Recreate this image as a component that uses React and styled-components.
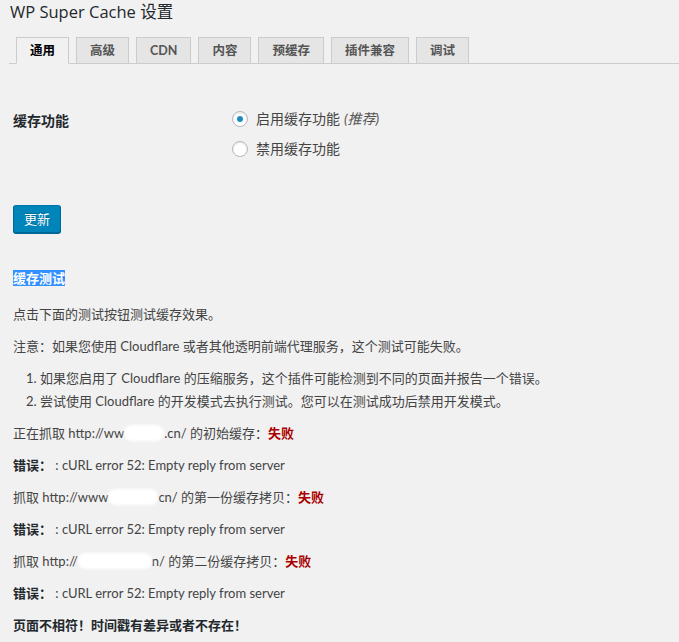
import React from "react";
import styled, { createGlobalStyle } from "styled-components";

const Global = createGlobalStyle`
  html, body { margin: 0; padding: 0; background: #f1f1f1; }
  body {
    font-family: Lato, "Noto Sans CJK SC", sans-serif;
    font-size: 13px;
    color: #444;
  }
`;

const Page = styled.div`
  width: 679px;
  height: 642px;
  overflow: hidden;
  background: #f1f1f1;
`;

const Title = styled.h1`
  margin: 0;
  padding-left: 10px;
  font-family: "Open Sans", "Noto Sans CJK SC", sans-serif;
  font-size: 16.5px;
  line-height: 24px;
  font-weight: 400;
  color: #23282d;
`;

const TabBar = styled.nav`
  display: flex;
  align-items: flex-end;
  margin: 13px 0 0 9px;
  height: 26px;
  border-bottom: 1px solid #ccc;
`;

const Tab = styled.div`
  box-sizing: border-box;
  height: 27px;
  margin-left: 7px;
  margin-bottom: -1px;
  padding: 0 13px;
  line-height: 26px;
  font-size: 12.5px;
  font-weight: 700;
  color: ${(p) => (p.$active ? "#000" : "#555")};
  background: ${(p) => (p.$active ? "#f1f1f1" : "#e5e5e5")};
  border: 1px solid #ccc;
  border-bottom-color: ${(p) => (p.$active ? "#f1f1f1" : "#ccc")};
`;

const Content = styled.div`
  padding-left: 13px;
`;

const FormRow = styled.div`
  display: grid;
  grid-template-columns: 219px 1fr;
  margin-top: 45px;
`;

const Label = styled.div`
  padding-top: 2px;
  line-height: 20px;
  height: 20px;
  font-size: 14px;
  font-weight: 700;
  color: #23282d;
`;

const Options = styled.div`
  display: flex;
  flex-direction: column;
  gap: 10px;
`;

const Option = styled.label`
  display: flex;
  align-items: center;
  gap: 8px;
  height: 20px;
  line-height: 20px;
  font-size: 14px;
  color: #444;
`;

const Radio = styled.span`
  box-sizing: border-box;
  flex: none;
  width: 16px;
  height: 16px;
  border-radius: 50%;
  border: 1px solid #b4b9be;
  background: #fff;
  box-shadow: inset 0 1px 2px rgba(0, 0, 0, 0.1);
  display: flex;
  align-items: center;
  justify-content: center;
  &::after {
    content: "";
    display: ${(p) => (p.$checked ? "block" : "none")};
    width: 6px;
    height: 6px;
    border-radius: 50%;
    background: #1e8cbe;
  }
`;

const Em = styled.em`
  margin-left: 4px;
  color: #555;
`;

const Button = styled.button`
  box-sizing: border-box;
  display: block;
  margin-top: 46px;
  height: 28px;
  padding: 0 10px 1px;
  background: #0085ba;
  border: 1px solid;
  border-color: #0073aa #006799 #006799;
  border-radius: 3px;
  box-shadow: 0 1px 0 #006799;
  color: #fff;
  font-family: inherit;
  font-size: 13px;
  text-shadow: 0 -1px 1px #006799;
`;

const Heading = styled.h3`
  margin: 37px 0 0;
  height: 16px;
  font-size: 13px;
  line-height: 16px;
  font-weight: 700;
`;

const Selected = styled.span`
  background: #3390ff;
  color: #fff;
`;

const Para = styled.p`
  margin: ${(p) => (p.$first ? "18px" : "12px")} 0 0;
  height: 20px;
  line-height: 20px;
  white-space: nowrap;
  font-weight: ${(p) => (p.$bold ? 700 : 400)};
  color: ${(p) => (p.$bold ? "#23282d" : "#444")};
`;

const List = styled.ol`
  margin: 12px 0 0;
  padding-left: 13px;
  list-style-position: inside;
  display: flex;
  flex-direction: column;
  gap: 3px;
`;

const Item = styled.li`
  height: 20px;
  line-height: 20px;
  white-space: nowrap;
`;

const Strong = styled.strong`
  color: #23282d;
`;

const Fail = styled.strong`
  color: #a00;
`;

const Blob = styled.span`
  display: inline-block;
  width: ${(p) => p.$w}px;
  height: 16px;
  margin-bottom: -3px;
  background: #fff;
  border-radius: 8px;
  filter: blur(1.5px);
`;

const tabs = ["通用", "高级", "CDN", "内容", "预缓存", "插件兼容", "调试"];

export default function App() {
  return (
    <Page>
      <Global />
      <Title>WP Super Cache 设置</Title>
      <TabBar>
        {tabs.map((t, i) => (
          <Tab key={t} $active={i === 0}>
            {t}
          </Tab>
        ))}
      </TabBar>
      <Content>
        <FormRow>
          <Label>缓存功能</Label>
          <Options>
            <Option>
              <Radio $checked />
              <span>
                启用缓存功能<Em>(推荐)</Em>
              </span>
            </Option>
            <Option>
              <Radio />
              <span>禁用缓存功能</span>
            </Option>
          </Options>
        </FormRow>
        <Button>更新</Button>
        <Heading>
          <Selected>缓存测试</Selected>
        </Heading>
        <Para $first>点击下面的测试按钮测试缓存效果。</Para>
        <Para>注意：如果您使用 Cloudflare 或者其他透明前端代理服务，这个测试可能失败。</Para>
        <List>
          <Item>如果您启用了 Cloudflare 的压缩服务，这个插件可能检测到不同的页面并报告一个错误。</Item>
          <Item>尝试使用 Cloudflare 的开发模式去执行测试。您可以在测试成功后禁用开发模式。</Item>
        </List>
        <Para>
          正在抓取 http://ww<Blob $w={40} />.cn/ 的初始缓存：<Fail>失败</Fail>
        </Para>
        <Para>
          <Strong>错误：</Strong> : cURL error 52: Empty reply from server
        </Para>
        <Para>
          抓取 http://www<Blob $w={50} />cn/ 的第一份缓存拷贝：<Fail>失败</Fail>
        </Para>
        <Para>
          <Strong>错误：</Strong> : cURL error 52: Empty reply from server
        </Para>
        <Para>
          抓取 http://<Blob $w={74} />n/ 的第二份缓存拷贝：<Fail>失败</Fail>
        </Para>
        <Para>
          <Strong>错误：</Strong> : cURL error 52: Empty reply from server
        </Para>
        <Para $bold>页面不相符！时间戳有差异或者不存在！</Para>
      </Content>
    </Page>
  );
}
